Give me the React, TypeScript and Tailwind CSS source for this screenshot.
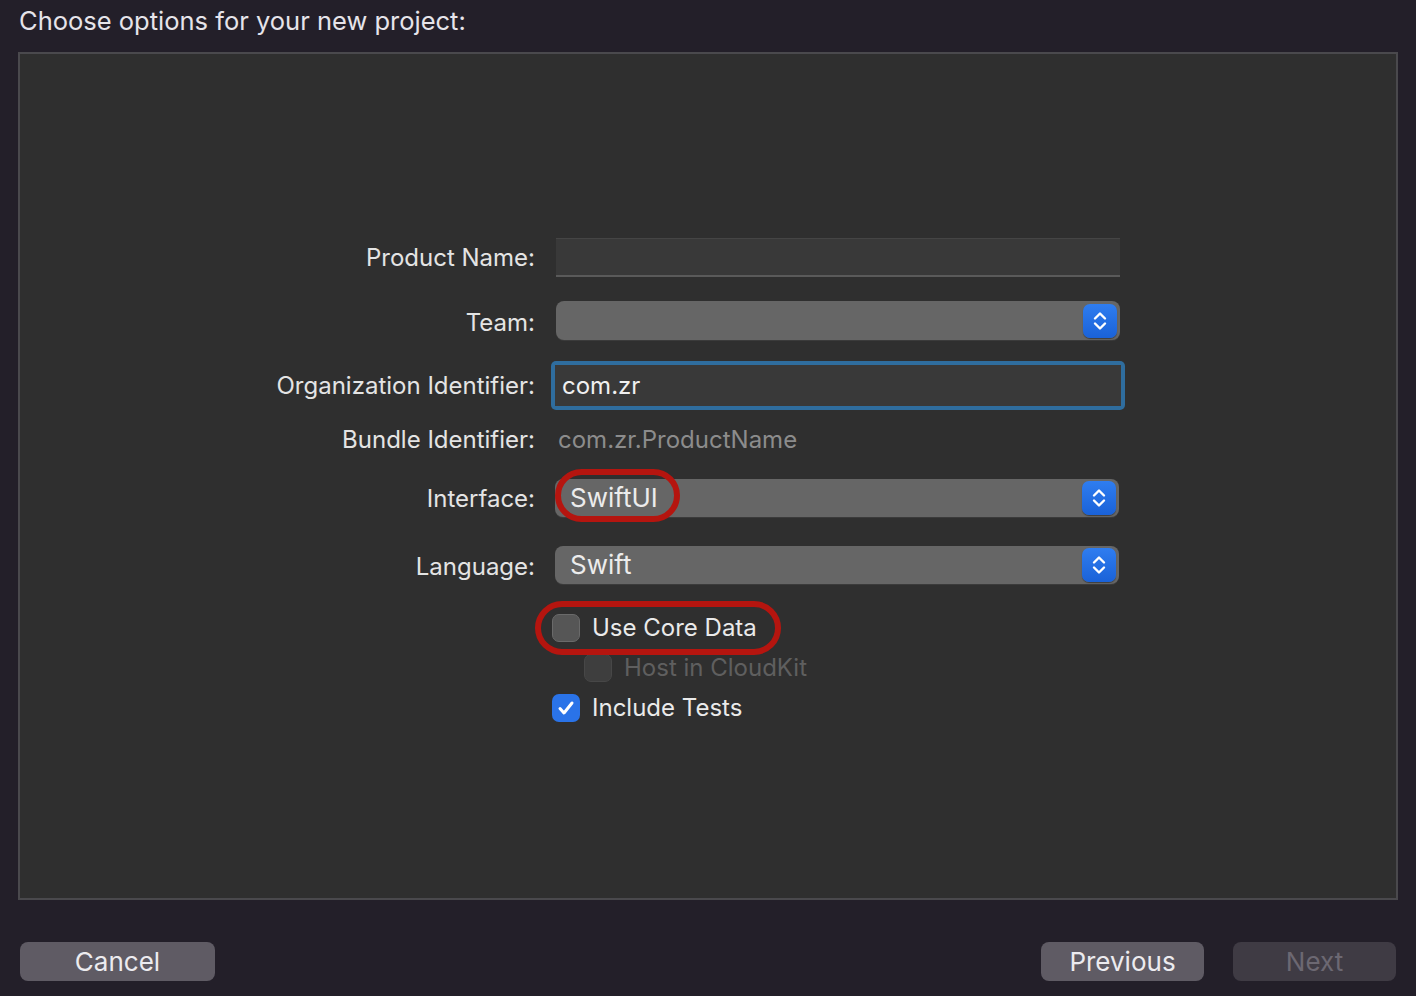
import React from "react";

const font = { fontFamily: "Inter, 'Noto Sans', sans-serif" };

function Stepper() {
  return (
    <span className="grid h-[34px] w-[34px] place-items-center rounded-[7px] bg-gradient-to-b from-[#2f7df0] to-[#1a62d8] shadow-[0_1px_1px_rgba(0,0,0,0.4)]">
      <svg width="16" height="24" viewBox="0 0 16 24" fill="none" stroke="white" strokeWidth="2.4" strokeLinecap="round" strokeLinejoin="round">
        <path d="M3 9.5 8 4.5l5 5" />
        <path d="M3 14.5l5 5 5-5" />
      </svg>
    </span>
  );
}

function Popup({ value, children }: { value?: string; children?: React.ReactNode }) {
  return (
    <div className="relative flex h-full w-[564px] items-center justify-between rounded-[8px] bg-[#666666] pl-[15px] pr-[3px] shadow-[0_1px_0_rgba(255,255,255,0.06)]">
      <span className="text-[26px] leading-none text-[#ececec]">{value}</span>
      <Stepper />
      {children}
    </div>
  );
}

function Label({ children }: { children: React.ReactNode }) {
  return (
    <div className="flex w-[515px] shrink-0 items-center justify-end text-[24px] text-[#e4e4e4]">
      {children}
    </div>
  );
}

function Checkbox({ checked, dim }: { checked?: boolean; dim?: boolean }) {
  if (checked) {
    return (
      <span className="grid h-[28px] w-[28px] place-items-center rounded-[7px] bg-[#2a73e8]">
        <svg width="20" height="20" viewBox="0 0 20 20" fill="none" stroke="white" strokeWidth="3" strokeLinecap="round" strokeLinejoin="round">
          <path d="M4 10.5l4 4.5 8-10" />
        </svg>
      </span>
    );
  }
  return (
    <span
      className={
        "h-[28px] w-[28px] rounded-[7px] border " +
        (dim ? "border-[#474747] bg-[#3e3e3e]" : "border-[#6a6a6a] bg-[#565656]")
      }
    />
  );
}

export default function App() {
  return (
    <div className="h-[996px] w-full overflow-hidden bg-[#231f29]" style={font}>
      <div className="flex h-[52px] items-start pl-[19px] pt-[2px] text-[25.5px] text-[#e6e4ea]">
        Choose options for your new project:
      </div>

      <div className="ml-[18px] h-[848px] w-[1380px] border-2 border-[#4a494d] bg-[#2f2f2f]">
        <div className="pt-[184px]">
          {/* Product Name */}
          <div className="flex h-[39px]">
            <Label>Product Name:</Label>
            <div className="ml-[21px] h-full w-[564px] border-t border-t-[#454545] border-b-2 border-b-[#5a5a5a] bg-[#393939]" />
          </div>

          {/* Team */}
          <div className="mt-[24px] flex h-[39px]">
            <Label>
              <span className="pt-[4px]">Team:</span>
            </Label>
            <div className="ml-[21px] h-full">
              <Popup />
            </div>
          </div>

          {/* Organization Identifier */}
          <div className="mt-[21px] flex h-[49px]">
            <Label>Organization Identifier:</Label>
            <div className="ml-[16px] h-full w-[574px] rounded-[5px] bg-[#2f6d9e] p-[4px]">
              <div className="flex h-full items-center bg-[#393939] px-[7px] text-[24px] text-[#f0f0f0]">com.zr</div>
            </div>
          </div>

          {/* Bundle Identifier */}
          <div className="mt-[15px] flex h-[30px]">
            <Label>Bundle Identifier:</Label>
            <div className="ml-[23px] flex items-center text-[24px] text-[#8c8c8c]">com.zr.ProductName</div>
          </div>

          {/* Interface */}
          <div className="mt-[24px] flex h-[38px]">
            <Label>
              <span className="pt-[2px]">Interface:</span>
            </Label>
            <div className="ml-[20px] h-full">
              <Popup value="SwiftUI">
                <span className="pointer-events-none absolute left-[0px] top-[-10px] h-[53px] w-[125px] rounded-[28px] border-[6px] border-[#b5150f]" />
              </Popup>
            </div>
          </div>

          {/* Language */}
          <div className="mt-[29px] flex h-[38px]">
            <Label>
              <span className="pt-[4px]">Language:</span>
            </Label>
            <div className="ml-[20px] h-full">
              <Popup value="Swift" />
            </div>
          </div>

          {/* Checkboxes */}
          <div className="mt-[30px] flex h-[28px] pl-[532px]">
            <div className="relative flex items-center gap-[12px]">
              <Checkbox />
              <span className="text-[24px] text-[#eaeaea]">Use Core Data</span>
              <span className="pointer-events-none absolute left-[-17px] top-[-13px] h-[54px] w-[246px] rounded-[27px] border-[6px] border-[#b5150f]" />
            </div>
          </div>
          <div className="mt-[12px] flex h-[28px] pl-[564px]">
            <div className="flex items-center gap-[12px]">
              <Checkbox dim />
              <span className="text-[24px] text-[#5f5f5f]">Host in CloudKit</span>
            </div>
          </div>
          <div className="mt-[12px] flex h-[28px] pl-[532px]">
            <div className="flex items-center gap-[12px]">
              <Checkbox checked />
              <span className="text-[24px] text-[#eaeaea]">Include Tests</span>
            </div>
          </div>
        </div>
      </div>

      <div className="mt-[42px] flex items-center px-[20px]">
        <button className="flex h-[39px] w-[195px] items-center justify-center rounded-[8px] bg-[#5f5b64] text-[26px] text-[#ecebef]">
          Cancel
        </button>
        <span className="flex-1" />
        <button className="flex h-[39px] w-[163px] items-center justify-center rounded-[8px] bg-[#5f5b64] text-[26px] text-[#ecebef]">
          Previous
        </button>
        <button className="ml-[29px] flex h-[39px] w-[163px] items-center justify-center rounded-[8px] bg-[#3f3b44] text-[26px] text-[#6c6872]">
          Next
        </button>
      </div>
    </div>
  );
}
